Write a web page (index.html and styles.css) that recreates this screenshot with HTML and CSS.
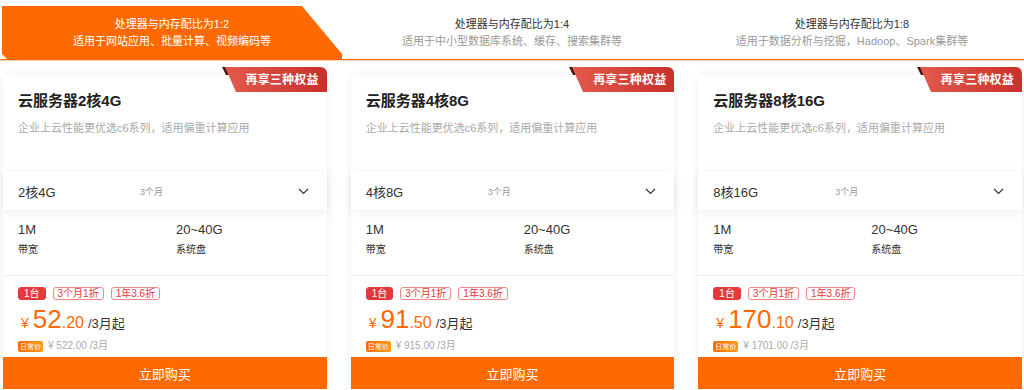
FILE: index.html
```html
<!DOCTYPE html>
<html lang="zh-CN">
<head>
<meta charset="utf-8">
<title>云服务器</title>
<link rel="stylesheet" href="styles.css">
</head>
<body>
<div class="page">
  <div class="tabs">
    <div class="tab active">
      <div class="tab-title">处理器与内存配比为1:2</div>
      <div class="tab-sub">适用于网站应用、批量计算、视频编码等</div>
    </div>
    <div class="tab">
      <div class="tab-title">处理器与内存配比为1:4</div>
      <div class="tab-sub">适用于中小型数据库系统、缓存、搜索集群等</div>
    </div>
    <div class="tab">
      <div class="tab-title">处理器与内存配比为1:8</div>
      <div class="tab-sub">适用于数据分析与挖掘，Hadoop、Spark集群等</div>
    </div>
  </div>

  <div class="cards">
    <div class="card">
      <div class="badge">
        <svg class="badge-bg" width="105" height="25" viewBox="0 0 105 25"><defs><linearGradient id="bg1" x1="0" x2="1" y1="0" y2="0"><stop offset="0" stop-color="#e35a4b"/><stop offset="1" stop-color="#c8302d"/></linearGradient></defs><polygon points="0,0 8,0 7,8 4,8" fill="#4a1414"/><path d="M3 0 H98 Q105 0 105 7 V25 H14 Z" fill="url(#bg1)"/></svg>
        <span class="badge-text">再享三种权益</span>
      </div>
      <div class="card-head">
        <div class="card-title">云服务器2核4G</div>
        <div class="card-desc">企业上云性能更优选c6系列，适用偏重计算应用</div>
      </div>
      <div class="select">
        <span class="select-val">2核4G</span>
        <span class="select-dur">3个月</span>
        <svg class="chev" width="11" height="7" viewBox="0 0 11 7"><path d="M1 1 L5.5 5.5 L10 1" fill="none" stroke="#333" stroke-width="1.2"/></svg>
      </div>
      <div class="specs">
        <div class="spec"><div class="spec-val">1M</div><div class="spec-label">带宽</div></div>
        <div class="spec"><div class="spec-val">20~40G</div><div class="spec-label">系统盘</div></div>
      </div>
      <div class="price-box">
        <div class="tags"><span class="tag solid">1台</span><span class="tag">3个月1折</span><span class="tag">1年3.6折</span></div>
        <div class="price"><span class="yen">¥</span><span class="int">52</span><span class="dec">.20</span><span class="unit">/3月起</span></div>
        <div class="daily"><span class="daily-tag">日常价</span><span class="daily-price">¥ 522.00 /3月</span></div>
      </div>
      <div class="buy">立即购买</div>
    </div>

    <div class="card">
      <div class="badge">
        <svg class="badge-bg" width="105" height="25" viewBox="0 0 105 25"><defs><linearGradient id="bg2" x1="0" x2="1" y1="0" y2="0"><stop offset="0" stop-color="#e35a4b"/><stop offset="1" stop-color="#c8302d"/></linearGradient></defs><polygon points="0,0 8,0 7,8 4,8" fill="#4a1414"/><path d="M3 0 H98 Q105 0 105 7 V25 H14 Z" fill="url(#bg2)"/></svg>
        <span class="badge-text">再享三种权益</span>
      </div>
      <div class="card-head">
        <div class="card-title">云服务器4核8G</div>
        <div class="card-desc">企业上云性能更优选c6系列，适用偏重计算应用</div>
      </div>
      <div class="select">
        <span class="select-val">4核8G</span>
        <span class="select-dur">3个月</span>
        <svg class="chev" width="11" height="7" viewBox="0 0 11 7"><path d="M1 1 L5.5 5.5 L10 1" fill="none" stroke="#333" stroke-width="1.2"/></svg>
      </div>
      <div class="specs">
        <div class="spec"><div class="spec-val">1M</div><div class="spec-label">带宽</div></div>
        <div class="spec"><div class="spec-val">20~40G</div><div class="spec-label">系统盘</div></div>
      </div>
      <div class="price-box">
        <div class="tags"><span class="tag solid">1台</span><span class="tag">3个月1折</span><span class="tag">1年3.6折</span></div>
        <div class="price"><span class="yen">¥</span><span class="int">91</span><span class="dec">.50</span><span class="unit">/3月起</span></div>
        <div class="daily"><span class="daily-tag">日常价</span><span class="daily-price">¥ 915.00 /3月</span></div>
      </div>
      <div class="buy">立即购买</div>
    </div>

    <div class="card">
      <div class="badge">
        <svg class="badge-bg" width="105" height="25" viewBox="0 0 105 25"><defs><linearGradient id="bg3" x1="0" x2="1" y1="0" y2="0"><stop offset="0" stop-color="#e35a4b"/><stop offset="1" stop-color="#c8302d"/></linearGradient></defs><polygon points="0,0 8,0 7,8 4,8" fill="#4a1414"/><path d="M3 0 H98 Q105 0 105 7 V25 H14 Z" fill="url(#bg3)"/></svg>
        <span class="badge-text">再享三种权益</span>
      </div>
      <div class="card-head">
        <div class="card-title">云服务器8核16G</div>
        <div class="card-desc">企业上云性能更优选c6系列，适用偏重计算应用</div>
      </div>
      <div class="select">
        <span class="select-val">8核16G</span>
        <span class="select-dur">3个月</span>
        <svg class="chev" width="11" height="7" viewBox="0 0 11 7"><path d="M1 1 L5.5 5.5 L10 1" fill="none" stroke="#333" stroke-width="1.2"/></svg>
      </div>
      <div class="specs">
        <div class="spec"><div class="spec-val">1M</div><div class="spec-label">带宽</div></div>
        <div class="spec"><div class="spec-val">20~40G</div><div class="spec-label">系统盘</div></div>
      </div>
      <div class="price-box">
        <div class="tags"><span class="tag solid">1台</span><span class="tag">3个月1折</span><span class="tag">1年3.6折</span></div>
        <div class="price"><span class="yen">¥</span><span class="int">170</span><span class="dec">.10</span><span class="unit">/3月起</span></div>
        <div class="daily"><span class="daily-tag">日常价</span><span class="daily-price">¥ 1701.00 /3月</span></div>
      </div>
      <div class="buy">立即购买</div>
    </div>
  </div>
</div>
</body>
</html>
```

FILE: styles.css
```css
* { box-sizing: border-box; }
html, body { margin: 0; padding: 0; background: #fff; }
body {
  font-family: "Liberation Sans", "Noto Sans CJK SC", sans-serif;
  color: #333;
  width: 1024px;
  height: 390px;
  overflow: hidden;
}
.page { padding: 0 2px 0 2px; }

.tabs {
  display: grid;
  grid-template-columns: repeat(3, 1fr);
  margin: 6px -2px 0 -2px;
  padding: 0 2px;
  height: 54px;
  border-bottom: 1px solid #ff6a00;
  box-shadow: 0 1px 1px rgba(255, 130, 40, 0.35);
}
.tab {
  display: flex;
  flex-direction: column;
  align-items: center;
  justify-content: center;
  font-size: 11px;
  line-height: 17px;
}
.tab.active {
  background: #ff6a00;
  clip-path: polygon(0 0, 300px 0, 100% calc(100% - 5px), 100% 100%, 5px 100%, 0 calc(100% - 5px));
}
.tab-title { color: #333; }
.tab-sub { color: #999; }
.tab.active .tab-title, .tab.active .tab-sub { color: #fff; }

.cards {
  display: grid;
  grid-template-columns: repeat(3, 1fr);
  column-gap: 24px;
  margin: 15px 0 0 1px;
}
.card {
  position: relative;
  background: #fff;
  box-shadow: 0 0 8px rgba(0, 0, 0, 0.07);
}
.badge {
  position: absolute;
  top: -8px;
  right: 0;
  width: 105px;
  height: 25px;
  display: flex;
  align-items: center;
  justify-content: flex-end;
  padding-right: 8px;
}
.badge-bg { position: absolute; left: 0; top: 0; }
.badge-text {
  position: relative;
  color: #fff;
  font-size: 12px;
  font-weight: bold;
  line-height: 14px;
  letter-spacing: 0.2px;
}
.card-head {
  height: 97px;
  padding: 17px 15px 0;
}
.card-title {
  font-size: 15px;
  font-weight: bold;
  line-height: 18px;
  color: #222;
}
.card-desc {
  margin-top: 10px;
  font-size: 11px;
  line-height: 16px;
  color: #aaa;
}
.select {
  height: 38px;
  display: flex;
  align-items: center;
  padding: 0 18px 0 15px;
  background: #fff;
  box-shadow: 0 2px 10px rgba(0, 0, 0, 0.08);
  position: relative;
}
.select-val { width: 122px; font-size: 13px; color: #333; }
.select-dur { flex: 1; font-size: 9px; color: #999; }
.chev { display: block; }

.specs {
  display: grid;
  grid-template-columns: 158px 1fr;
  height: 65px;
  padding: 12px 15px 0;
}
.spec-val { font-size: 13px; line-height: 16px; color: #333; }
.spec-label { margin-top: 6px; font-size: 10px; line-height: 12px; color: #333; }

.price-box {
  border-top: 1px solid #eee;
  height: 82px;
  padding: 11px 15px 0;
}
.tags { display: flex; gap: 7px; }
.tag {
  height: 13px;
  padding: 0 4px;
  border: 1px solid #f0888a;
  border-radius: 3px;
  font-size: 10px;
  line-height: 11px;
  color: #e4393c;
  white-space: nowrap;
}
.tag.solid { background: #e4393c; border-color: #e4393c; color: #fff; padding: 0 5px; }
.price {
  margin-top: 4px;
  height: 30px;
  line-height: 30px;
  white-space: nowrap;
}
.yen { color: #ff6a00; font-size: 14px; margin: 0 4px 0 3px; }
.int { color: #ff6a00; font-size: 26px; }
.dec { color: #ff6a00; font-size: 16px; }
.unit { color: #333; font-size: 13px; margin-left: 4px; }
.daily {
  margin-top: 6px;
  display: flex;
  align-items: center;
  gap: 5px;
}
.daily-tag {
  height: 11px;
  padding: 0 2px;
  border-radius: 2px;
  background: linear-gradient(90deg, #ff6a00, #ff9a1a);
  color: #fff;
  font-size: 7px;
  line-height: 11px;
  white-space: nowrap;
}
.daily-price { font-size: 10px; color: #aaa; line-height: 12px; }

.buy {
  height: 32px;
  background: #ff6a00;
  color: #fff;
  font-size: 13px;
  display: flex;
  align-items: center;
  justify-content: center;
}
```
